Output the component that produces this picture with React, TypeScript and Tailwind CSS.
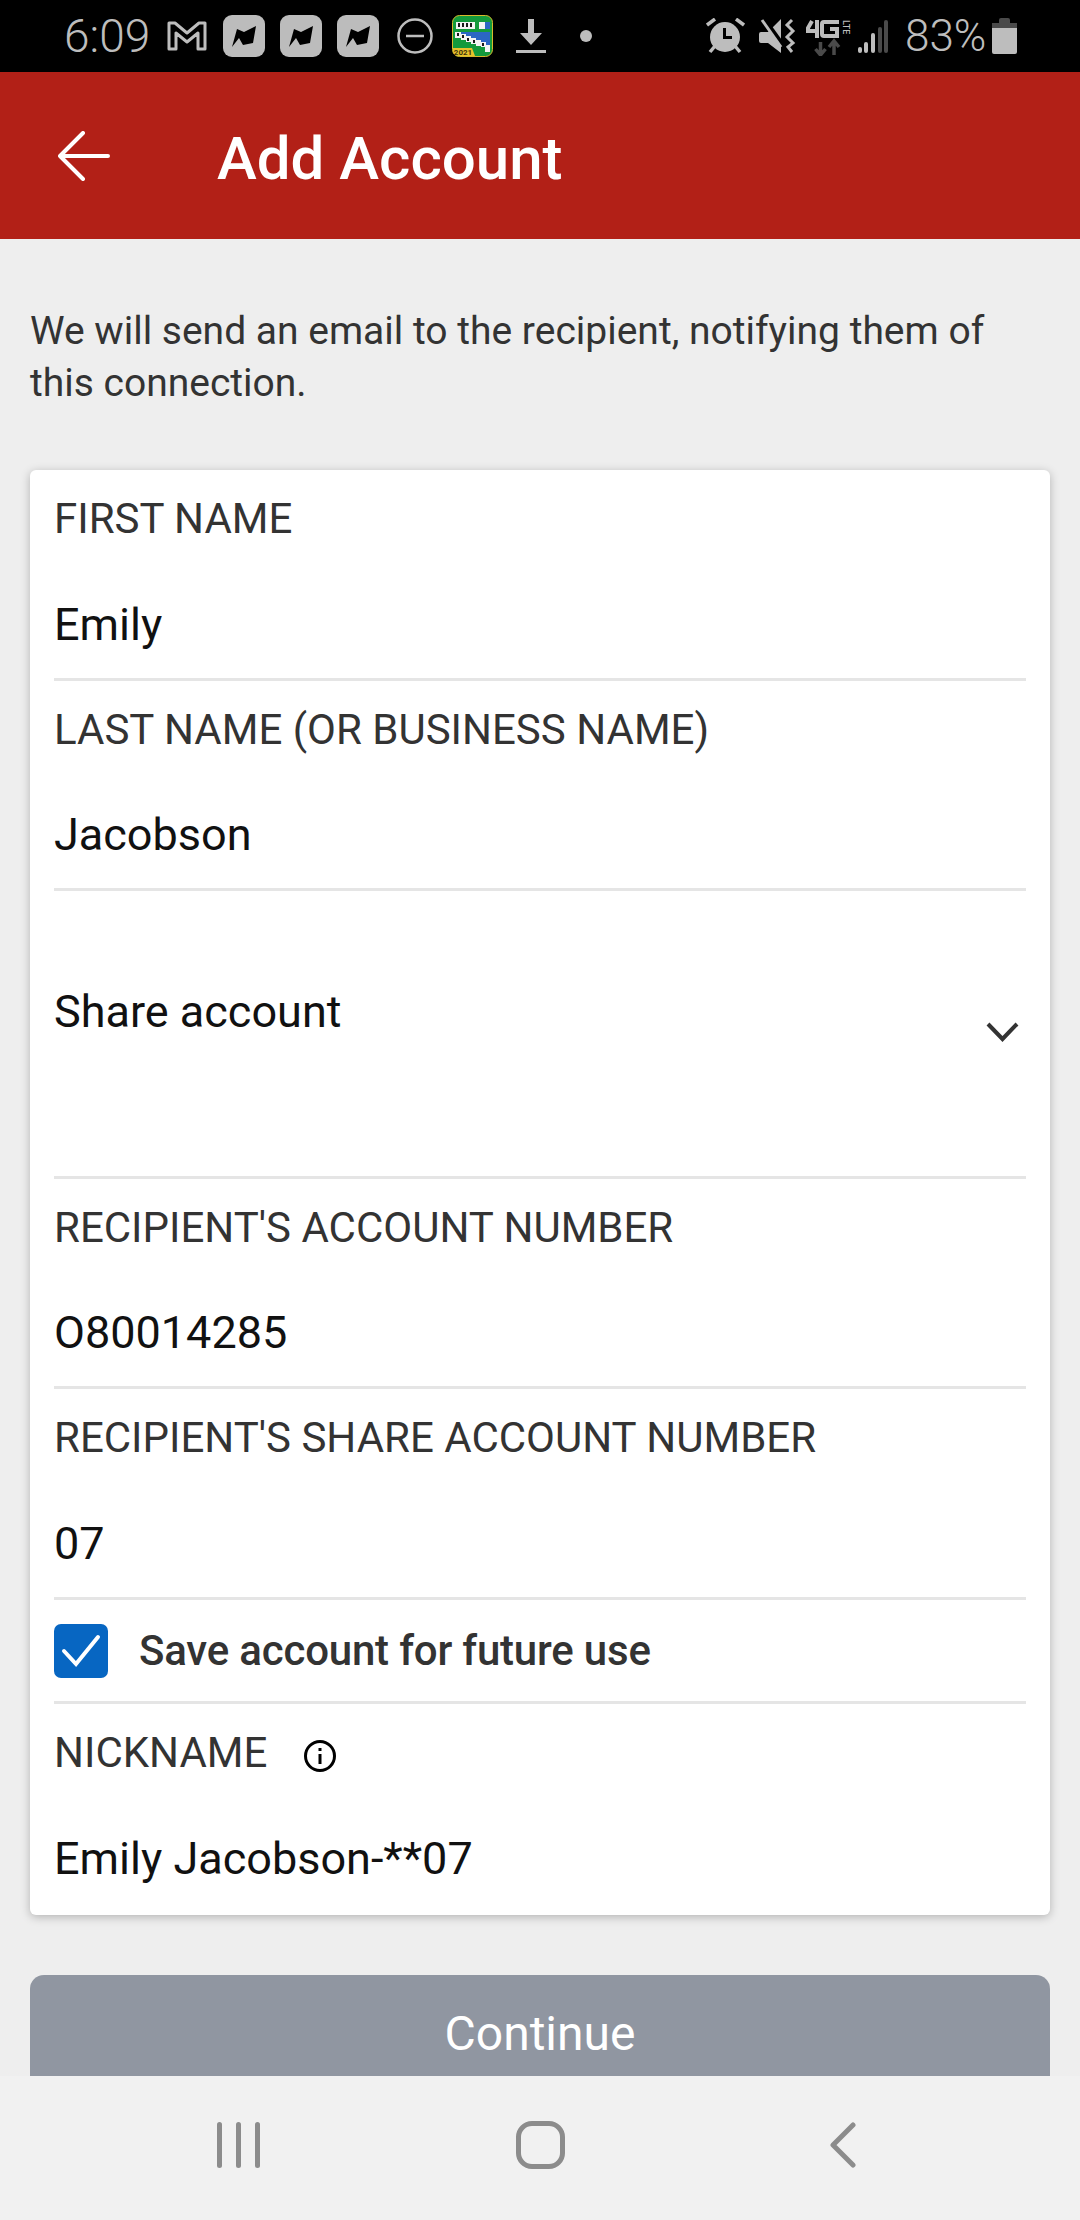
const font = { fontFamily: "Roboto, sans-serif" };

function MessengerBox() {
  return (
    <div className="w-[42px] h-[42px] rounded-[9px] bg-[#bcbcbc]">
      <svg width="42" height="42" viewBox="0 0 42 42">
        <path d="M9 32 L14 14 L21 17 L33 11 L30 28 L20 30 L16 23 Z" fill="#000" />
      </svg>
    </div>
  );
}

function SolitaireIcon() {
  return (
    <svg width="41" height="42" viewBox="0 0 41 42">
      <rect x="0.5" y="0.5" width="40" height="41" rx="7" fill="#149a3c" stroke="#d8b92c" />
      <rect x="4" y="7" width="19" height="7" fill="#f4f4f4" />
      <rect x="27" y="7" width="6" height="7" fill="#f4f4f4" />
      <rect x="33" y="7" width="5" height="7" fill="#2b66c4" />
      <path d="M3 17h6v6H3zM9 19h5v6H9zM14 21h5v6h-5zM19 23h5v6h-5zM24 25h5v6h-5zM29 27h5v5h-5zM33 30h5v7h-5z" fill="#f4f4f4" />
      <path d="M9 17h29v2H9zM14 19h24v2H14zM19 21h19v2H19zM24 23h14v2H24zM29 25h9v2h-9zM34 27h4v3h-4z" fill="#2b66c4" />
      <path d="M6 8h2v4H6zM10 8h2v4h-2zM14 8h2v4h-2zM18 8h2v4h-2zM5 18h2v3H5zM10 20h2v3h-2zM15 23h2v3h-2zM21 25h2v3h-2zM30 28h2v3h-2z" fill="#1a1a1a" />
      <path d="M1 33 H20 L23 41 H7 Q1 41 1 36 Z" fill="#e8c22b" />
      <text x="11" y="40" fontSize="8" fontWeight="700" fill="#3d320c" textAnchor="middle">2021</text>
    </svg>
  );
}

function StatusBar() {
  return (
    <div className="h-[72px] bg-black flex items-center text-[#bdbdbd] shrink-0 pl-[64px]" style={font}>
      <span className="text-[46px] w-[103px] leading-none font-light">6:09</span>
      <svg width="40" height="32" viewBox="0 0 40 32" fill="none" stroke="#bdbdbd" strokeWidth="3" strokeLinejoin="round">
        <path d="M2 3 L8 3 L20 13 L32 3 L38 3 V29 H31 V13 L20 22 L9 13 V29 H2 Z" />
      </svg>
      <div className="flex gap-[15px] ml-[16px]">
        <MessengerBox />
        <MessengerBox />
        <MessengerBox />
      </div>
      <svg className="ml-[18px]" width="36" height="36" viewBox="0 0 36 36" fill="none" stroke="#bdbdbd" strokeWidth="2.5">
        <circle cx="18" cy="18" r="16.5" />
        <path d="M9 18h18" />
      </svg>
      <div className="ml-[19px]">
        <SolitaireIcon />
      </div>
      <svg className="ml-[23px]" width="30" height="36" viewBox="0 0 30 36" fill="#bdbdbd">
        <path d="M12 1h6v14h8L15 27 4 15h8z" />
        <rect x="0" y="32" width="30" height="3" />
      </svg>
      <div className="w-3 h-3 rounded-full bg-[#bdbdbd] ml-[34px]" />
      {/* alarm */}
      <svg className="ml-[114px]" width="39" height="36" viewBox="0 0 39 36" fill="#bdbdbd">
        <circle cx="19" cy="19" r="15" />
        <path d="M17 10h3v8h6v3h-9z" fill="#000" />
        <path d="M1 7 L9 1 M38 7 L30 1 M4 34 L9 28 M34 34 L29 28" stroke="#bdbdbd" strokeWidth="3.5" fill="none" />
      </svg>
      {/* muted / vibrate */}
      <svg className="ml-[14px]" width="37" height="36" viewBox="0 0 37 36" fill="#bdbdbd">
        <path d="M0 16 Q0 14 2 14 H9 L22 1 V35 L9 25 H2 Q0 25 0 23 Z" />
        <path d="M6 2 L24 27" stroke="#000" strokeWidth="4" fill="none" />
        <path d="M3 2 L22 29" stroke="#bdbdbd" strokeWidth="3" fill="none" />
        <path d="M33 2 L28 7 L34 13 L28 19 L34 25 L29 29 L33 34" fill="none" stroke="#bdbdbd" strokeWidth="3" />
      </svg>
      {/* 4G LTE */}
      <div className="ml-[10px] w-[45px] h-[38px] mt-[2px]">
        <svg width="45" height="38" viewBox="0 0 45 38" fill="none">
          <path d="M6 3 L2 10 V13 H13 M11 2 V20" stroke="#bdbdbd" strokeWidth="4" />
          <path d="M33 4 H18 Q16 4 16 6 V16 Q16 18 18 18 H31 V11 H24" stroke="#bdbdbd" strokeWidth="4" />
          <text transform="translate(37,2) rotate(90)" fontSize="9" fill="#bdbdbd" fontWeight="500">LTE</text>
          <path d="M14.5 24 V37 M9.5 31 L14.5 37 L19.5 31 M28 37 V23 M23 29 L28 23 L33 29" stroke="#4a4a4a" strokeWidth="3.5" />
        </svg>
      </div>
      {/* signal */}
      <svg className="ml-[7px]" width="32" height="34" viewBox="0 0 32 34">
        <rect x="0" y="28" width="4" height="6" rx="2" fill="#bdbdbd" />
        <rect x="6" y="23" width="4" height="11" rx="2" fill="#bdbdbd" />
        <rect x="13" y="14" width="4" height="20" rx="2" fill="#bdbdbd" />
        <rect x="20" y="8" width="4" height="26" rx="2" fill="#4a4a4a" />
        <rect x="26" y="1" width="4" height="33" rx="2" fill="#4a4a4a" />
      </svg>
      <span className="text-[44px] leading-none ml-[15px] w-[81px] font-light whitespace-nowrap">83%</span>
      <div className="ml-[6px] w-[25px] h-[36px] flex flex-col items-center">
        <div className="w-[11px] h-[5px] bg-[#4a4a4a] rounded-t-[2px]" />
        <div className="w-full h-[5px] bg-[#4a4a4a]" />
        <div className="w-full flex-1 bg-[#bdbdbd] rounded-b-[2px]" />
      </div>
    </div>
  );
}

function Header() {
  return (
    <div className="h-[167px] bg-[#b22017] flex items-center shrink-0 pl-[58px]">
      <svg width="52" height="50" viewBox="0 0 52 50" fill="none" stroke="#fff" strokeWidth="4" strokeLinecap="round" strokeLinejoin="round">
        <path d="M25 2 L2 25 L25 48 M2 25 H50" />
      </svg>
      <h1 className="ml-[107px] mt-[6px] text-[60px] font-medium text-white leading-none">Add Account</h1>
    </div>
  );
}

function Field({ label, value, divider = true, icon }: { label: string; value: string; divider?: boolean; icon?: boolean }) {
  return (
    <div className={`h-[211px] flex flex-col ${divider ? "border-b-[3px] border-[#e5e5e5]" : ""}`}>
      <div className="flex items-center h-[46px] mt-[26px]">
        <span className="text-[42px] text-[#333] leading-none">{label}</span>
        {icon && (
          <svg className="ml-[37px] mt-[6px]" width="32" height="32" viewBox="0 0 32 32" fill="none">
            <circle cx="16" cy="16" r="14.5" stroke="#000" strokeWidth="3" />
            <rect x="14.5" y="14" width="3" height="10" fill="#000" />
            <rect x="14.5" y="8" width="3" height="3" fill="#000" />
          </svg>
        )}
      </div>
      <div className="mt-[59px] h-[46px] flex items-center text-[45px] text-[#111] leading-none">{value}</div>
    </div>
  );
}

function FormCard() {
  return (
    <div className="mx-[30px] mt-[61px] bg-white rounded-[6px] px-[24px] h-[1445px] shadow-[0_2px_10px_rgba(0,0,0,0.25)] flex flex-col">
      <Field label="FIRST NAME" value="Emily" />
      <Field label="LAST NAME (OR BUSINESS NAME)" value="Jacobson" />
      <div className="h-[288px] border-b-[3px] border-[#e5e5e5] relative">
        <div className="pt-[98px] text-[45px] text-[#111] leading-[46px]">Share account</div>
        <svg className="absolute right-[7px] top-[131px]" width="33" height="20" viewBox="0 0 33 20" fill="none" stroke="#333" strokeWidth="4">
          <path d="M2 2 L16.5 17 L31 2" />
        </svg>
      </div>
      <Field label="RECIPIENT'S ACCOUNT NUMBER" value="O80014285" />
      <Field label="RECIPIENT'S SHARE ACCOUNT NUMBER" value="07" />
      <div className="h-[105px] border-b-[3px] border-[#e5e5e5] flex items-center">
        <div className="w-[54px] h-[54px] rounded-[7px] bg-[#0766c2] flex items-center justify-center">
          <svg width="44" height="36" viewBox="0 0 44 36" fill="none" stroke="#fff" strokeWidth="4" strokeLinecap="round">
            <path d="M5 18 L17 31 L39 4" />
          </svg>
        </div>
        <span className="ml-[31px] text-[42px] font-medium text-[#333] leading-none tracking-[-0.2px]">Save account for future use</span>
      </div>
      <Field label="NICKNAME" value="Emily Jacobson-**07" divider={false} icon />
    </div>
  );
}

function NavBar() {
  return (
    <div className="h-[144px] bg-[#f1f1f1] shrink-0 relative z-10 flex items-center justify-center pb-[6px]">
      <div className="w-full flex items-center pl-[217px] h-[48px]">
        <div className="flex gap-[14px]">
          <div className="w-[5px] h-[46px] rounded-full bg-[#8c8c8c]" />
          <div className="w-[5px] h-[46px] rounded-full bg-[#8c8c8c]" />
          <div className="w-[5px] h-[46px] rounded-full bg-[#8c8c8c]" />
        </div>
        <div className="ml-[256px] w-[49px] h-[48px] rounded-[16px] border-[5px] border-[#8c8c8c]" />
        <svg className="ml-[265px]" width="26" height="46" viewBox="0 0 26 46" fill="none" stroke="#8c8c8c" strokeWidth="5" strokeLinecap="round" strokeLinejoin="round">
          <path d="M23 3 L3 23 L23 43" />
        </svg>
      </div>
    </div>
  );
}

export default function App() {
  return (
    <div className="w-[1080px] h-[2220px] overflow-hidden bg-[#eeeeee] flex flex-col" style={font}>
      <StatusBar />
      <Header />
      <div className="flex-1 min-h-0 overflow-hidden">
        <p className="mx-[30px] mt-[66px] text-[39px] leading-[52px] text-[#333] pr-[30px]">
          We will send an email to the recipient, notifying them of this connection.
        </p>
        <FormCard />
        <div className="mx-[30px] mt-[60px] h-[140px] rounded-[14px] bg-[#9096a1] text-white text-[48px] flex justify-center pt-[34px] leading-[50px]">
          Continue
        </div>
      </div>
      <NavBar />
    </div>
  );
}
